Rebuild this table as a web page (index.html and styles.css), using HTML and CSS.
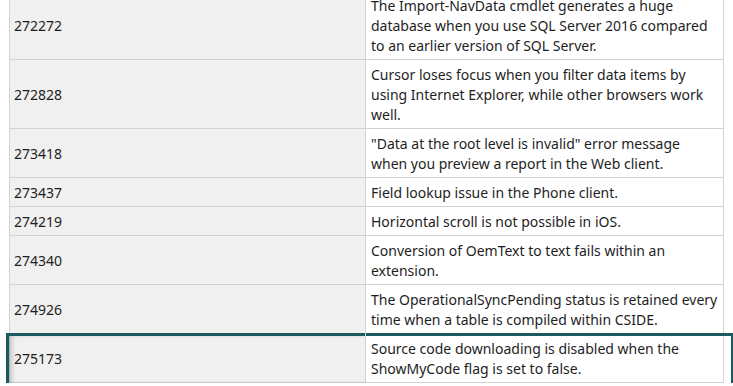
FILE: index.html
```html
<!DOCTYPE html>
<html lang="en">
<head>
    <meta charset="UTF-8">
    <meta name="viewport" content="width=device-width, initial-scale=1.0">
    <title>Fixed issues</title>
    <link rel="stylesheet" href="styles.css">
</head>
<body>
    <div class="page">
        <table class="issues">
            <colgroup>
                <col class="col-id">
                <col class="col-desc">
            </colgroup>
            <tr>
                <td class="id">272272</td>
                <td class="desc">The Import-NavData cmdlet generates a huge database when you use SQL Server 2016 compared to an earlier version of SQL Server.</td>
            </tr>
            <tr>
                <td class="id">272828</td>
                <td class="desc">Cursor loses focus when you filter data items by using Internet Explorer, while other browsers work well.</td>
            </tr>
            <tr>
                <td class="id">273418</td>
                <td class="desc">"Data at the root level is invalid" error message when you preview a report in the Web client.</td>
            </tr>
            <tr>
                <td class="id">273437</td>
                <td class="desc">Field lookup issue in the Phone client.</td>
            </tr>
            <tr>
                <td class="id">274219</td>
                <td class="desc">Horizontal scroll is not possible in iOS.</td>
            </tr>
            <tr>
                <td class="id">274340</td>
                <td class="desc">Conversion of OemText to text fails within an extension.</td>
            </tr>
            <tr>
                <td class="id">274926</td>
                <td class="desc">The OperationalSyncPending status is retained every time when a table is compiled within CSIDE.</td>
            </tr>
            <tr class="selected">
                <td class="id">275173</td>
                <td class="desc">Source code downloading is disabled when the ShowMyCode flag is set to false.</td>
            </tr>
        </table>
    </div>
</body>
</html>
```

FILE: styles.css
```css
body {
    margin: 0;
    background: #ffffff;
    font-family: 'Noto Sans', sans-serif;
    font-size: 14px;
    color: #1e1e1e;
}
.page {
    padding-left: 9px;
    margin-top: -10px;
}
.issues {
    width: 714px;
    border-collapse: collapse;
    table-layout: fixed;
}
.col-id {
    width: 356px;
}
.col-desc {
    width: 358px;
}
.issues td {
    border: 1px solid #d2d2d2;
    padding: 5px 4px 3px 5px;
    line-height: 20px;
    vertical-align: middle;
}
.issues .id {
    padding-left: 4px;
    background: #f0f0f0;
}
.issues .desc {
    background: #ffffff;
}
.selected td {
    position: relative;
}
/* focus frame around the current row */
.selected td::after {
    content: "";
    position: absolute;
    top: -1px;
    bottom: -4px;
    border: 3px solid #1b5a5e;
    pointer-events: none;
}
.selected .id::after {
    left: -4px;
    right: 0;
    border-right: 0;
    box-shadow: inset 4px 0 4px -1px rgba(0, 0, 0, 0.18);
}
.selected .desc::after {
    left: 0;
    right: -11px;
    border-left: 0;
}
```
